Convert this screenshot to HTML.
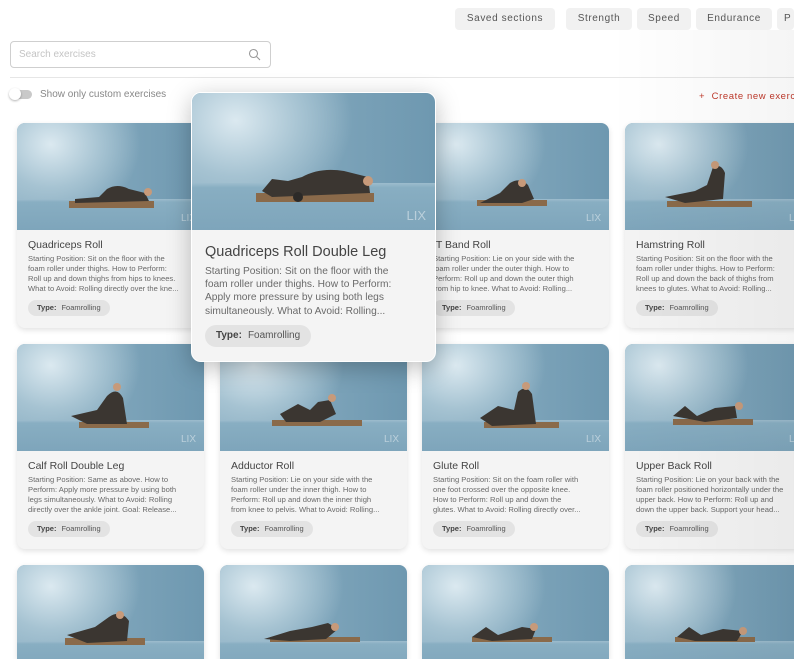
<!DOCTYPE html>
<html><head><meta charset="utf-8"><style>
*{box-sizing:border-box;margin:0;padding:0}
html,body{width:794px;height:659px;overflow:hidden}
body{background:#fff;font-family:"Liberation Sans",sans-serif;position:relative}
.chip{position:absolute;top:8px;height:22px;background:#f1f1f1;border-radius:4px;font-size:10px;letter-spacing:.6px;color:#555;line-height:22px;text-align:center}
.search{position:absolute;left:10px;top:41px;width:261px;height:27px;border:1px solid #cfcfcf;border-radius:4px;font-size:10px;color:#c4c4c4;padding:7px 8px}
.hr{position:absolute;left:10px;right:0;top:77px;height:1px;background:#e6e6e6}
.card{position:absolute;width:187px;height:205px;border-radius:8px;background:#f4f4f4;box-shadow:0 2px 6px rgba(0,0,0,.12);overflow:hidden}
.img{position:absolute;left:0;top:0;width:100%;height:107px;background:radial-gradient(ellipse 60% 90% at 18% 20%,#dbe9f0 0%,#a6c3d2 45%,rgba(120,160,183,0) 80%),linear-gradient(90deg,#8fb2c5,#6e98b0)}
.floor{position:absolute;left:0;right:0;top:76px;bottom:0;background:linear-gradient(180deg,#9dbccd 0,#88aec2 10%,#7ea5bb 100%)}
.lx{position:absolute;right:8px;bottom:6px;color:rgba(255,255,255,.45);font-size:10px}
.t{position:absolute;left:11px;top:116px;font-size:10.5px;color:#444}
.d{position:absolute;left:11px;top:131px;width:152px;font-size:7.6px;line-height:10px;color:#6a6a6a;height:40px;overflow:hidden}
.tag{position:absolute;left:11px;top:177px;height:16px;border-radius:8px;background:#e3e3e3;font-size:7.5px;line-height:16px;padding:0 9px;color:#555}
.tag b{color:#444;margin-right:5px}
svg.f{position:absolute;left:0;top:0}
</style></head><body>
<div class="chip" style="left:455px;width:100px">Saved sections</div>
<div class="chip" style="left:566px;width:66px">Strength</div>
<div class="chip" style="left:637px;width:54px">Speed</div>
<div class="chip" style="left:696px;width:76px">Endurance</div>
<div class="chip" style="left:777px;width:17px;text-align:left;padding-left:7px">P</div>
<div class="search">Search exercises
<svg style="position:absolute;right:9px;top:6px" width="13" height="13" viewBox="0 0 13 13"><circle cx="5.5" cy="5.5" r="4" fill="none" stroke="#999" stroke-width="1.1"/><path d="M8.5 8.5L12 12" stroke="#999" stroke-width="1.1"/></svg></div>
<div class="hr"></div>
<div style="position:absolute;left:10px;top:90px;width:22px;height:9px;border-radius:5px;background:#c9c9c9"></div>
<div style="position:absolute;left:9px;top:88px;width:12px;height:12px;border-radius:6px;background:#fff;box-shadow:0 1px 2px rgba(0,0,0,.3)"></div>
<div style="position:absolute;left:40px;top:89px;font-size:10px;color:#888">Show only custom exercises</div>
<div style="position:absolute;left:699px;top:91px;width:95px;overflow:hidden;font-size:9.5px;color:#c0392b;letter-spacing:.6px;white-space:nowrap">+&nbsp;&nbsp;Create new exercise</div>

<!-- row1 -->
<div class="card" style="left:17px;top:123px"><div class="img"><div class="floor"></div><svg class="f" width="187" height="107"><rect x="52" y="78" width="85" height="7" fill="#8a6a4a"/><path d="M58 76 L82 74 L90 66 Q100 60 112 66 L128 70 L132 78 L58 80Z" fill="#3b3631"/><circle cx="131" cy="69" r="4" fill="#c79a7a"/></svg><span class="lx">LIX</span></div><div class="t">Quadriceps Roll</div><div class="d">Starting Position: Sit on the floor with the foam roller under thighs. How to Perform: Roll up and down thighs from hips to knees. What to Avoid: Rolling directly over the kne...</div><div class="tag"><b>Type:</b>Foamrolling</div></div>
<div class="card" style="left:422px;top:123px"><div class="img"><div class="floor"></div><svg class="f" width="187" height="107"><rect x="55" y="77" width="70" height="6" fill="#8a6a4a"/><path d="M58 80 L78 70 L88 60 Q98 54 106 62 L112 76 L100 80Z" fill="#3b3631"/><circle cx="100" cy="60" r="4" fill="#c79a7a"/></svg><span class="lx">LIX</span></div><div class="t">IT Band Roll</div><div class="d">Starting Position: Lie on your side with the foam roller under the outer thigh. How to Perform: Roll up and down the outer thigh from hip to knee. What to Avoid: Rolling...</div><div class="tag"><b>Type:</b>Foamrolling</div></div>
<div class="card" style="left:625px;top:123px"><div class="img"><div class="floor"></div><svg class="f" width="187" height="107"><rect x="42" y="78" width="85" height="6" fill="#8a6a4a"/><path d="M40 74 L70 68 L82 62 L88 44 Q96 40 100 50 L98 76 L60 80Z" fill="#3b3631"/><circle cx="90" cy="42" r="4" fill="#c79a7a"/></svg><span class="lx">LIX</span></div><div class="t">Hamstring Roll</div><div class="d">Starting Position: Sit on the floor with the foam roller under thighs. How to Perform: Roll up and down the back of thighs from knees to glutes. What to Avoid: Rolling...</div><div class="tag"><b>Type:</b>Foamrolling</div></div>

<!-- row2 -->
<div class="card" style="left:17px;top:344px"><div class="img"><div class="floor"></div><svg class="f" width="187" height="107"><rect x="62" y="78" width="70" height="6" fill="#8a6a4a"/><path d="M54 72 L80 66 L90 52 Q100 42 106 54 L110 80 L70 80Z" fill="#3b3631"/><circle cx="100" cy="43" r="4" fill="#c79a7a"/></svg><span class="lx">LIX</span></div><div class="t">Calf Roll Double Leg</div><div class="d">Starting Position: Same as above. How to Perform: Apply more pressure by using both legs simultaneously. What to Avoid: Rolling directly over the ankle joint. Goal: Release...</div><div class="tag"><b>Type:</b>Foamrolling</div></div>
<div class="card" style="left:220px;top:344px"><div class="img"><div class="floor"></div><svg class="f" width="187" height="107"><rect x="52" y="76" width="90" height="6" fill="#8a6a4a"/><path d="M60 70 L78 60 L90 66 L98 58 L110 56 L116 70 L100 78 L66 78Z" fill="#3b3631"/><circle cx="112" cy="54" r="4" fill="#c79a7a"/></svg><span class="lx">LIX</span></div><div class="t">Adductor Roll</div><div class="d">Starting Position: Lie on your side with the foam roller under the inner thigh. How to Perform: Roll up and down the inner thigh from knee to pelvis. What to Avoid: Rolling...</div><div class="tag"><b>Type:</b>Foamrolling</div></div>
<div class="card" style="left:422px;top:344px"><div class="img"><div class="floor"></div><svg class="f" width="187" height="107"><rect x="62" y="78" width="75" height="6" fill="#8a6a4a"/><path d="M58 74 L76 62 L92 66 L96 48 Q104 40 110 50 L114 80 L70 82Z" fill="#3b3631"/><circle cx="104" cy="42" r="4" fill="#c79a7a"/></svg><span class="lx">LIX</span></div><div class="t">Glute Roll</div><div class="d">Starting Position: Sit on the foam roller with one foot crossed over the opposite knee. How to Perform: Roll up and down the glutes. What to Avoid: Rolling directly over...</div><div class="tag"><b>Type:</b>Foamrolling</div></div>
<div class="card" style="left:625px;top:344px"><div class="img"><div class="floor"></div><svg class="f" width="187" height="107"><rect x="48" y="75" width="80" height="6" fill="#8a6a4a"/><path d="M48 72 L60 62 L72 72 L90 64 L110 62 L112 74 L80 78Z" fill="#3b3631"/><circle cx="114" cy="62" r="4" fill="#c79a7a"/></svg><span class="lx">LIX</span></div><div class="t">Upper Back Roll</div><div class="d">Starting Position: Lie on your back with the foam roller positioned horizontally under the upper back. How to Perform: Roll up and down the upper back. Support your head...</div><div class="tag"><b>Type:</b>Foamrolling</div></div>

<!-- row3 -->
<div class="card" style="left:17px;top:565px;height:94px;border-radius:8px 8px 0 0"><div class="img"><div class="floor"></div><svg class="f" width="187" height="107"><rect x="48" y="73" width="80" height="7" fill="#8a6a4a"/><path d="M50 70 L78 62 L92 52 Q104 44 112 56 L110 76 L70 78Z" fill="#3b3631"/><circle cx="103" cy="50" r="4" fill="#c79a7a"/></svg></div></div>
<div class="card" style="left:220px;top:565px;height:94px;border-radius:8px 8px 0 0"><div class="img"><div class="floor"></div><svg class="f" width="187" height="107"><rect x="50" y="72" width="90" height="5" fill="#8a6a4a"/><path d="M44 74 L70 66 L92 62 L108 58 L118 64 L106 74 L70 76Z" fill="#3b3631"/><circle cx="115" cy="62" r="4" fill="#c79a7a"/></svg></div></div>
<div class="card" style="left:422px;top:565px;height:94px;border-radius:8px 8px 0 0"><div class="img"><div class="floor"></div><svg class="f" width="187" height="107"><rect x="50" y="72" width="80" height="5" fill="#8a6a4a"/><path d="M50 72 L64 62 L76 70 L100 62 L114 64 L110 74 L70 76Z" fill="#3b3631"/><circle cx="112" cy="62" r="4" fill="#c79a7a"/></svg></div></div>
<div class="card" style="left:625px;top:565px;height:94px;width:169px;border-radius:8px 0 0 0"><div class="img"><div class="floor"></div><svg class="f" width="187" height="107"><rect x="50" y="72" width="80" height="5" fill="#8a6a4a"/><path d="M52 72 L64 62 L76 70 L98 64 L118 66 L112 76 L70 76Z" fill="#3b3631"/><circle cx="118" cy="66" r="4" fill="#c79a7a"/></svg></div></div>

<div style="position:absolute;left:610px;top:30px;width:184px;height:629px;background:linear-gradient(90deg,rgba(0,0,0,0),rgba(0,0,0,.04));pointer-events:none"></div>

<!-- hover card -->
<div style="position:absolute;left:191px;top:92px;width:245px;height:270px;border-radius:10px;background:#f4f4f4;box-shadow:0 6px 24px rgba(0,0,0,.25);overflow:hidden;border:1px solid #fff">
<div class="img" style="height:137px"><div class="floor" style="top:90px"></div><svg class="f" width="245" height="137"><rect x="64" y="100" width="118" height="9" fill="#8a6a4a"/><path d="M70 98 L80 86 L96 88 L110 84 Q128 74 152 78 L176 84 L178 100 L80 104Z" fill="#3b3631"/><circle cx="176" cy="88" r="5" fill="#c79a7a"/><circle cx="106" cy="104" r="5" fill="#2c2a28"/></svg><span class="lx" style="font-size:13px;right:9px;bottom:7px">LIX</span></div>
<div style="position:absolute;left:13px;top:151px;font-size:14.5px;color:#444">Quadriceps Roll Double Leg</div>
<div style="position:absolute;left:13px;top:172px;width:202px;font-size:10.2px;line-height:13.2px;color:#6a6a6a">Starting Position: Sit on the floor with the foam roller under thighs. How to Perform: Apply more pressure by using both legs simultaneously. What to Avoid: Rolling...</div>
<div style="position:absolute;left:13px;top:232px;height:22px;border-radius:11px;background:#e3e3e3;font-size:10px;line-height:22px;padding:0 11px;color:#555"><b style="color:#444;margin-right:6px">Type:</b>Foamrolling</div>
</div>
</body></html>
